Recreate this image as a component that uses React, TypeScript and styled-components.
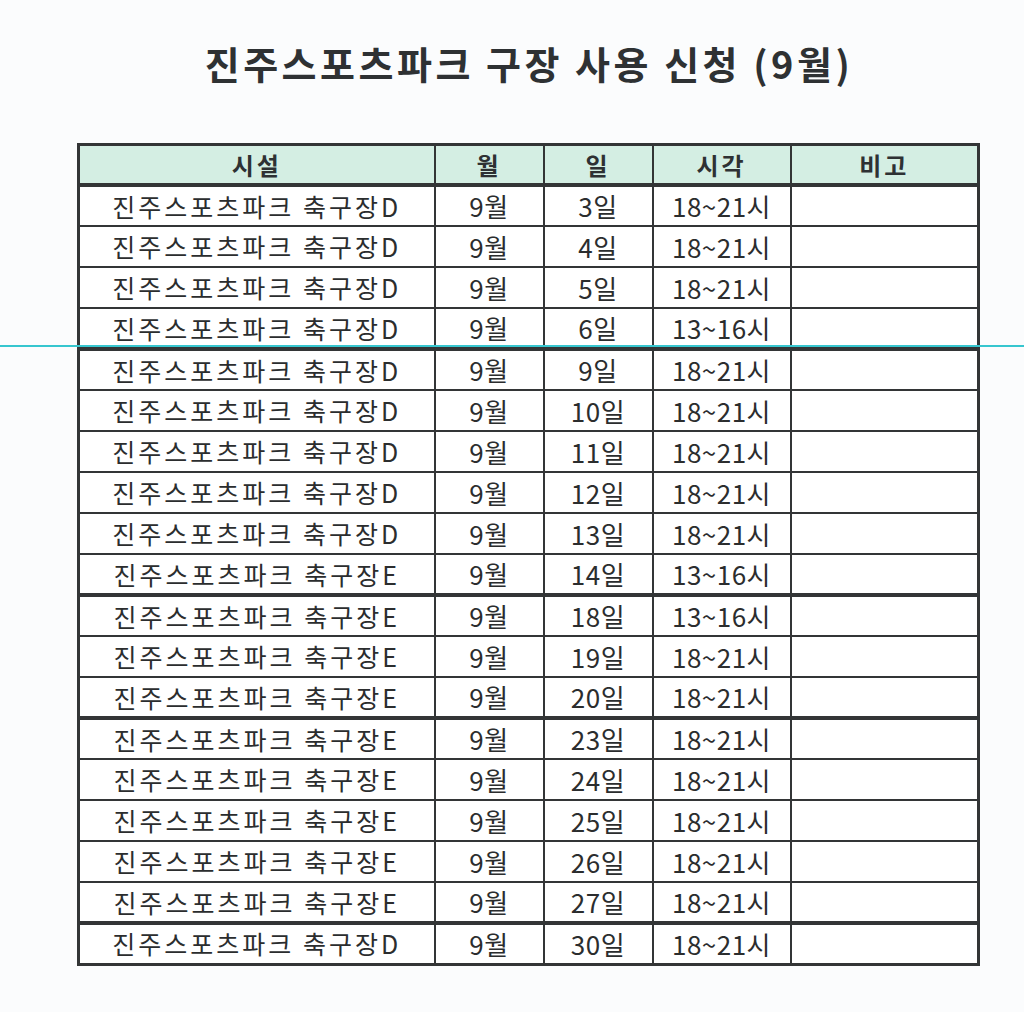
import React from "react";
import styled, { createGlobalStyle } from "styled-components";

const Global = createGlobalStyle`
  html, body { margin: 0; padding: 0; background: #fbfcfd; }
  body { font-family: "Noto Sans CJK KR", "Noto Sans", sans-serif; color: #2b2d2e; }
`;

const Page = styled.div`
  position: relative;
  width: 1024px;
  height: 1012px;
  overflow: hidden;
`;

const Title = styled.h1`
  margin: 0;
  padding-top: 34px;
  padding-left: 34px;
  text-align: center;
  font-size: 38px;
  font-weight: 700;
  letter-spacing: 3.5px;
  line-height: 58px;
  color: #2e3133;
`;

const Sheet = styled.div`
  margin: 51px 0 0 77px;
  width: 902px;
`;

const Table = styled.table`
  width: 900px;
  border-collapse: collapse;
  table-layout: fixed;
  border: 3px solid #333536;
`;

const Col = styled.col<{ $w: number }>`
  width: ${(p) => p.$w}px;
`;

const HeadCell = styled.th`
  height: 37px;
  padding: 0;
  background: #d4eee3;
  border: 2px solid #333536;
  border-bottom: 4px solid #333536;
  font-size: 24px;
  font-weight: 700;
  letter-spacing: 3px;
  color: #2e3133;
  text-align: center;
  vertical-align: middle;
  line-height: 1;
`;

const Row = styled.tr<{ $thick: boolean }>`
  height: 41px;
  td {
    border-bottom: ${(p) => (p.$thick ? "4px" : "2px")} solid #333536;
  }
`;

const Cell = styled.td<{ $num?: boolean }>`
  padding: 0;
  border-left: 2px solid #333536;
  border-right: 2px solid #333536;
  font-size: ${(p) => (p.$num ? "26px" : "25px")};
  font-weight: 400;
  letter-spacing: ${(p) => (p.$num ? "0.5px" : "3px")};
  color: #2b2d2e;
  text-align: center;
  vertical-align: middle;
  line-height: 1;
  background: #ffffff;
`;

const ScanLine = styled.div`
  position: absolute;
  left: 0;
  right: 0;
  top: 345px;
  height: 2px;
  background: #36c6cf;
`;

type R = { f: string; d: number; t: string };

const rows: R[] = [
  { f: "D", d: 3, t: "18~21시" },
  { f: "D", d: 4, t: "18~21시" },
  { f: "D", d: 5, t: "18~21시" },
  { f: "D", d: 6, t: "13~16시" },
  { f: "D", d: 9, t: "18~21시" },
  { f: "D", d: 10, t: "18~21시" },
  { f: "D", d: 11, t: "18~21시" },
  { f: "D", d: 12, t: "18~21시" },
  { f: "D", d: 13, t: "18~21시" },
  { f: "E", d: 14, t: "13~16시" },
  { f: "E", d: 18, t: "13~16시" },
  { f: "E", d: 19, t: "18~21시" },
  { f: "E", d: 20, t: "18~21시" },
  { f: "E", d: 23, t: "18~21시" },
  { f: "E", d: 24, t: "18~21시" },
  { f: "E", d: 25, t: "18~21시" },
  { f: "E", d: 26, t: "18~21시" },
  { f: "E", d: 27, t: "18~21시" },
  { f: "D", d: 30, t: "18~21시" },
];

const thickAfter = new Set([3, 9, 12, 17]);

export default function App() {
  return (
    <Page>
      <Global />
      <Title>진주스포츠파크 구장 사용 신청 (9월)</Title>
      <Sheet>
        <Table>
          <colgroup>
            <Col $w={356} />
            <Col $w={109} />
            <Col $w={109} />
            <Col $w={138} />
            <Col $w={188} />
          </colgroup>
          <thead>
            <tr>
              <HeadCell>시설</HeadCell>
              <HeadCell>월</HeadCell>
              <HeadCell>일</HeadCell>
              <HeadCell>시각</HeadCell>
              <HeadCell>비고</HeadCell>
            </tr>
          </thead>
          <tbody>
            {rows.map((r, i) => (
              <Row key={i} $thick={thickAfter.has(i)}>
                <Cell>진주스포츠파크 축구장{r.f}</Cell>
                <Cell $num>9월</Cell>
                <Cell $num>{r.d}일</Cell>
                <Cell $num>{r.t}</Cell>
                <Cell />
              </Row>
            ))}
          </tbody>
        </Table>
      </Sheet>
      <ScanLine />
    </Page>
  );
}
